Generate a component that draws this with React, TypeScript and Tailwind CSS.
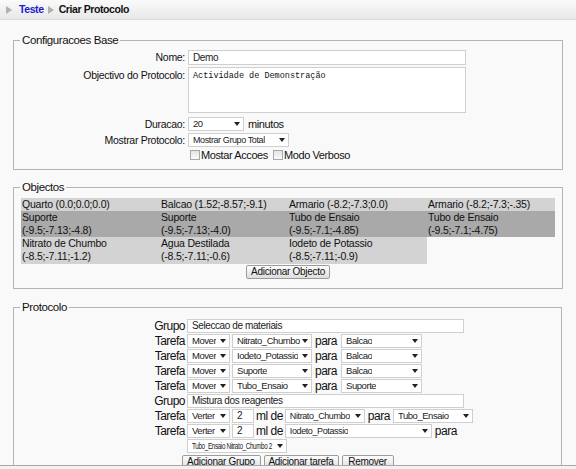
import React from 'react';

const font = "font-['Liberation_Sans',Arial,sans-serif]";

function Caret() {
  return (
    <svg width="6" height="4" viewBox="0 0 6 4" className="ml-[1px] shrink-0">
      <polygon points="0,0 6,0 3,4" fill="#222" />
    </svg>
  );
}

function Arrow() {
  return (
    <svg width="6" height="8" viewBox="0 0 6 8" className="shrink-0">
      <polygon points="0,0 6,4 0,8" fill="#b0b0b0" />
    </svg>
  );
}

function Select({ value, className = '', text = 'text-[9.5px] tracking-[-0.45px]' }: { value: string; className?: string; text?: string }) {
  return (
    <div
      className={`flex h-[14px] items-center justify-between overflow-hidden border border-[#cfcfcf] bg-white pl-[4px] pr-[3px] leading-none text-[#222] ${text} ${className}`}
    >
      <span className="overflow-hidden whitespace-nowrap">{value}</span>
      <Caret />
    </div>
  );
}

function TextBox({ value, className = '' }: { value: string; className?: string }) {
  return (
    <div className={`flex h-[14px] items-center border border-[#cfcfcf] bg-white pl-[4px] text-[10px] leading-none tracking-[-0.4px] text-[#222] ${className}`}>
      {value}
    </div>
  );
}

function Checkbox() {
  return <span className="inline-block h-[10px] w-[10px] shrink-0 border border-[#a8a8a8] bg-gradient-to-b from-[#e4e4e4] to-[#fafafa]" />;
}

function Button({ label, className = '' }: { label: string; className?: string }) {
  return (
    <div
      className={`flex h-[14px] items-center justify-center rounded-[2px] border border-[#9c9c9c] bg-gradient-to-b from-[#fdfdfd] to-[#dedede] text-[10px] leading-none tracking-[-0.3px] text-[#111] ${className}`}
    >
      {label}
    </div>
  );
}

const objects = [
  { bg: 'bg-[#d3d3d3]', cells: ['Quarto (0.0;0.0;0.0)', 'Balcao (1.52;-8.57;-9.1)', 'Armario (-8.2;-7.3;0.0)', 'Armario (-8.2;-7.3;-.35)'], h: 'h-[13px]' },
  { bg: 'bg-[#a9a9a9]', cells: ['Suporte (-9.5;-7.13;-4.8)', 'Suporte (-9.5;-7.13;-4.0)', 'Tubo de Ensaio (-9.5;-7.1;-4.85)', 'Tubo de Ensaio (-9.5;-7.1;-4.75)'], h: 'h-[26px]' },
  { bg: 'bg-[#d3d3d3]', cells: ['Nitrato de Chumbo (-8.5;-7.11;-1.2)', 'Agua Destilada (-8.5;-7.11;-0.6)', 'Iodeto de Potassio (-8.5;-7.11;-0.9)'], h: 'h-[27px]' },
];

const colW = ['w-[139px]', 'w-[128px]', 'w-[139px]', 'w-[128px]'];

const moves = [
  ['Nitrato_Chumbo', 'Balcao'],
  ['Iodeto_Potassio', 'Balcao'],
  ['Suporte', 'Balcao'],
  ['Tubo_Ensaio', 'Suporte'],
];

// split "Name (x;y;z)" on two lines when the cell is tall
function cellText(c: string, twoLines: boolean) {
  if (!twoLines) return c;
  const k = c.indexOf(' (');
  return (
    <>
      {c.slice(0, k)}
      <br />
      {c.slice(k + 1)}
    </>
  );
}

export default function App() {
  return (
    <div className={`h-[469px] w-[576px] overflow-hidden bg-[#f2f2f2] ${font} text-[#111]`}>
      <div className="h-[466px] overflow-hidden border-b border-[#a8a8a8] bg-[#f9f9f9]">
        {/* breadcrumb */}
        <div className="flex h-[20px] items-center gap-[4px] border-b border-[#dadada] bg-gradient-to-b from-[#fafafa] to-[#e8e8e8] pl-[6px] text-[10.5px] font-bold tracking-[-0.4px]">
          <Arrow />
          <span className="ml-[3px] text-[#1c1cd0]">Teste</span>
          <Arrow />
          <span className="ml-[1px]">Criar Protocolo</span>
        </div>

        {/* Configuracoes Base */}
        <fieldset className="ml-[13px] mt-[13px] w-[550px] border border-[#b4b4b4] pb-[8px] pt-[2px]">
          <legend className="ml-[6px] px-[2px] text-[11.5px] leading-[15px] tracking-[-0.4px]">Configuracoes Base</legend>
          <div className="grid grid-cols-[174px_1fr] items-center gap-y-[2px] text-[10.5px] leading-[13px] tracking-[-0.3px]">
            <span className="pr-[3px] text-right">Nome:</span>
            <TextBox value="Demo" className="h-[15px] w-[278px]" />
            <span className="self-start pr-[3px] pt-[2px] text-right">Objectivo do Protocolo:</span>
            <div className="h-[46px] w-[278px] border border-[#cfcfcf] bg-white pl-[4px] pt-[4px] font-['Liberation_Mono',monospace] text-[8.5px] leading-none tracking-normal">
              Actividade de Demonstração
            </div>
            <span className="mt-[2px] pr-[3px] text-right">Duracao:</span>
            <div className="mt-[2px] flex items-center gap-[4px]">
              <Select value="20" className="w-[56px]" />
              <span className="text-[11px] tracking-[-0.4px]">minutos</span>
            </div>
            <span className="pr-[3px] text-right">Mostrar Protocolo:</span>
            <Select value="Mostrar Grupo Total" className="w-[101px]" text="text-[9px] tracking-[-0.4px]" />
            <span />
            <div className="flex items-center text-[11px] leading-[12px] tracking-[-0.4px]">
              <span className="ml-[2px] flex"><Checkbox /></span>
              <span className="ml-[1px]">Mostar Accoes</span>
              <span className="ml-[5px] flex"><Checkbox /></span>
              <span className="ml-[1px]">Modo Verboso</span>
            </div>
          </div>
        </fieldset>

        {/* Objectos */}
        <fieldset className="ml-[13px] mt-[10px] w-[550px] border border-[#b4b4b4] pb-[9px] pt-[3px]">
          <legend className="ml-[6px] px-[2px] text-[11.5px] leading-[15px] tracking-[-0.4px]">Objectos</legend>
          <div className="ml-[7px] flex flex-col text-[10.5px] leading-[13px] tracking-[-0.2px]">
            {objects.map((row, i) => (
              <div key={i} className="flex">
                {row.cells.map((c, j) => (
                  <div key={j} className={`${colW[j]} ${row.h} ${row.bg} pl-[1px]`}>
                    {cellText(c, i > 0)}
                  </div>
                ))}
              </div>
            ))}
          </div>
          <div className="mt-[1px] flex justify-center">
            <Button label="Adicionar Objecto" className="w-[84px]" />
          </div>
        </fieldset>

        {/* Protocolo */}
        <fieldset className="ml-[13px] mt-[11px] w-[549px] border border-[#b4b4b4] pb-[10px] pt-[4px]">
          <legend className="ml-[6px] px-[2px] text-[11.5px] leading-[15px] tracking-[-0.4px]">Protocolo</legend>
          <div className="ml-[134px] grid grid-cols-[39px_292px] gap-y-[1px] text-[12px] leading-[14px] tracking-[-0.5px]">
            <span className="pr-[2px] text-right">Grupo</span>
            <TextBox value="Seleccao de materiais" className="w-[277px]" />
            {moves.map(([obj, dest], i) => (
              <React.Fragment key={i}>
                <span className="pr-[2px] text-right">Tarefa</span>
                <div className="flex items-center">
                  <Select value="Mover" className="w-[43px]" />
                  <Select value={obj} className="ml-[2px] w-[80px]" />
                  <span className="ml-[3px]">para</span>
                  <Select value={dest} className="ml-[4px] w-[81px]" />
                </div>
              </React.Fragment>
            ))}
            <span className="pr-[2px] text-right">Grupo</span>
            <TextBox value="Mistura dos reagentes" className="w-[277px]" />
            <span className="pr-[2px] text-right">Tarefa</span>
            <div className="flex items-center">
              <Select value="Verter" className="w-[43px]" />
              <TextBox value="2" className="ml-[2px] w-[22px]" />
              <span className="ml-[2px]">ml de</span>
              <Select value="Nitrato_Chumbo" className="ml-[2px] w-[80px]" text="text-[9px] tracking-[-0.4px]" />
              <span className="ml-[3px]">para</span>
              <Select value="Tubo_Ensaio" className="ml-[3px] w-[80px]" />
            </div>
            <span className="pr-[2px] text-right">Tarefa</span>
            <div className="flex flex-wrap items-center gap-y-[1px]">
              <Select value="Verter" className="w-[43px]" />
              <TextBox value="2" className="ml-[2px] w-[22px]" />
              <span className="ml-[2px]">ml de</span>
              <Select value="Iodeto_Potassio" className="ml-[2px] w-[147px]" text="text-[9px] tracking-[-0.4px]" />
              <span className="ml-[3px]">para</span>
              <div className="flex h-[14px] w-[100px] items-center justify-between overflow-hidden border border-[#cfcfcf] bg-white pl-[4px] pr-[3px] text-[9px] leading-none tracking-[-0.5px] text-[#222]">
                <span className="inline-block w-[84px] origin-left scale-x-[0.7] whitespace-nowrap">Tubo_Ensaio Nitrato_Chumbo 2</span>
                <Caret />
              </div>
            </div>
          </div>
          <div className="mt-[2px] flex justify-center gap-[3px]">
            <Button label="Adicionar Grupo" className="w-[79px]" />
            <Button label="Adicionar tarefa" className="w-[75px]" />
            <Button label="Remover" className="w-[52px]" />
          </div>
        </fieldset>
      </div>
    </div>
  );
}
